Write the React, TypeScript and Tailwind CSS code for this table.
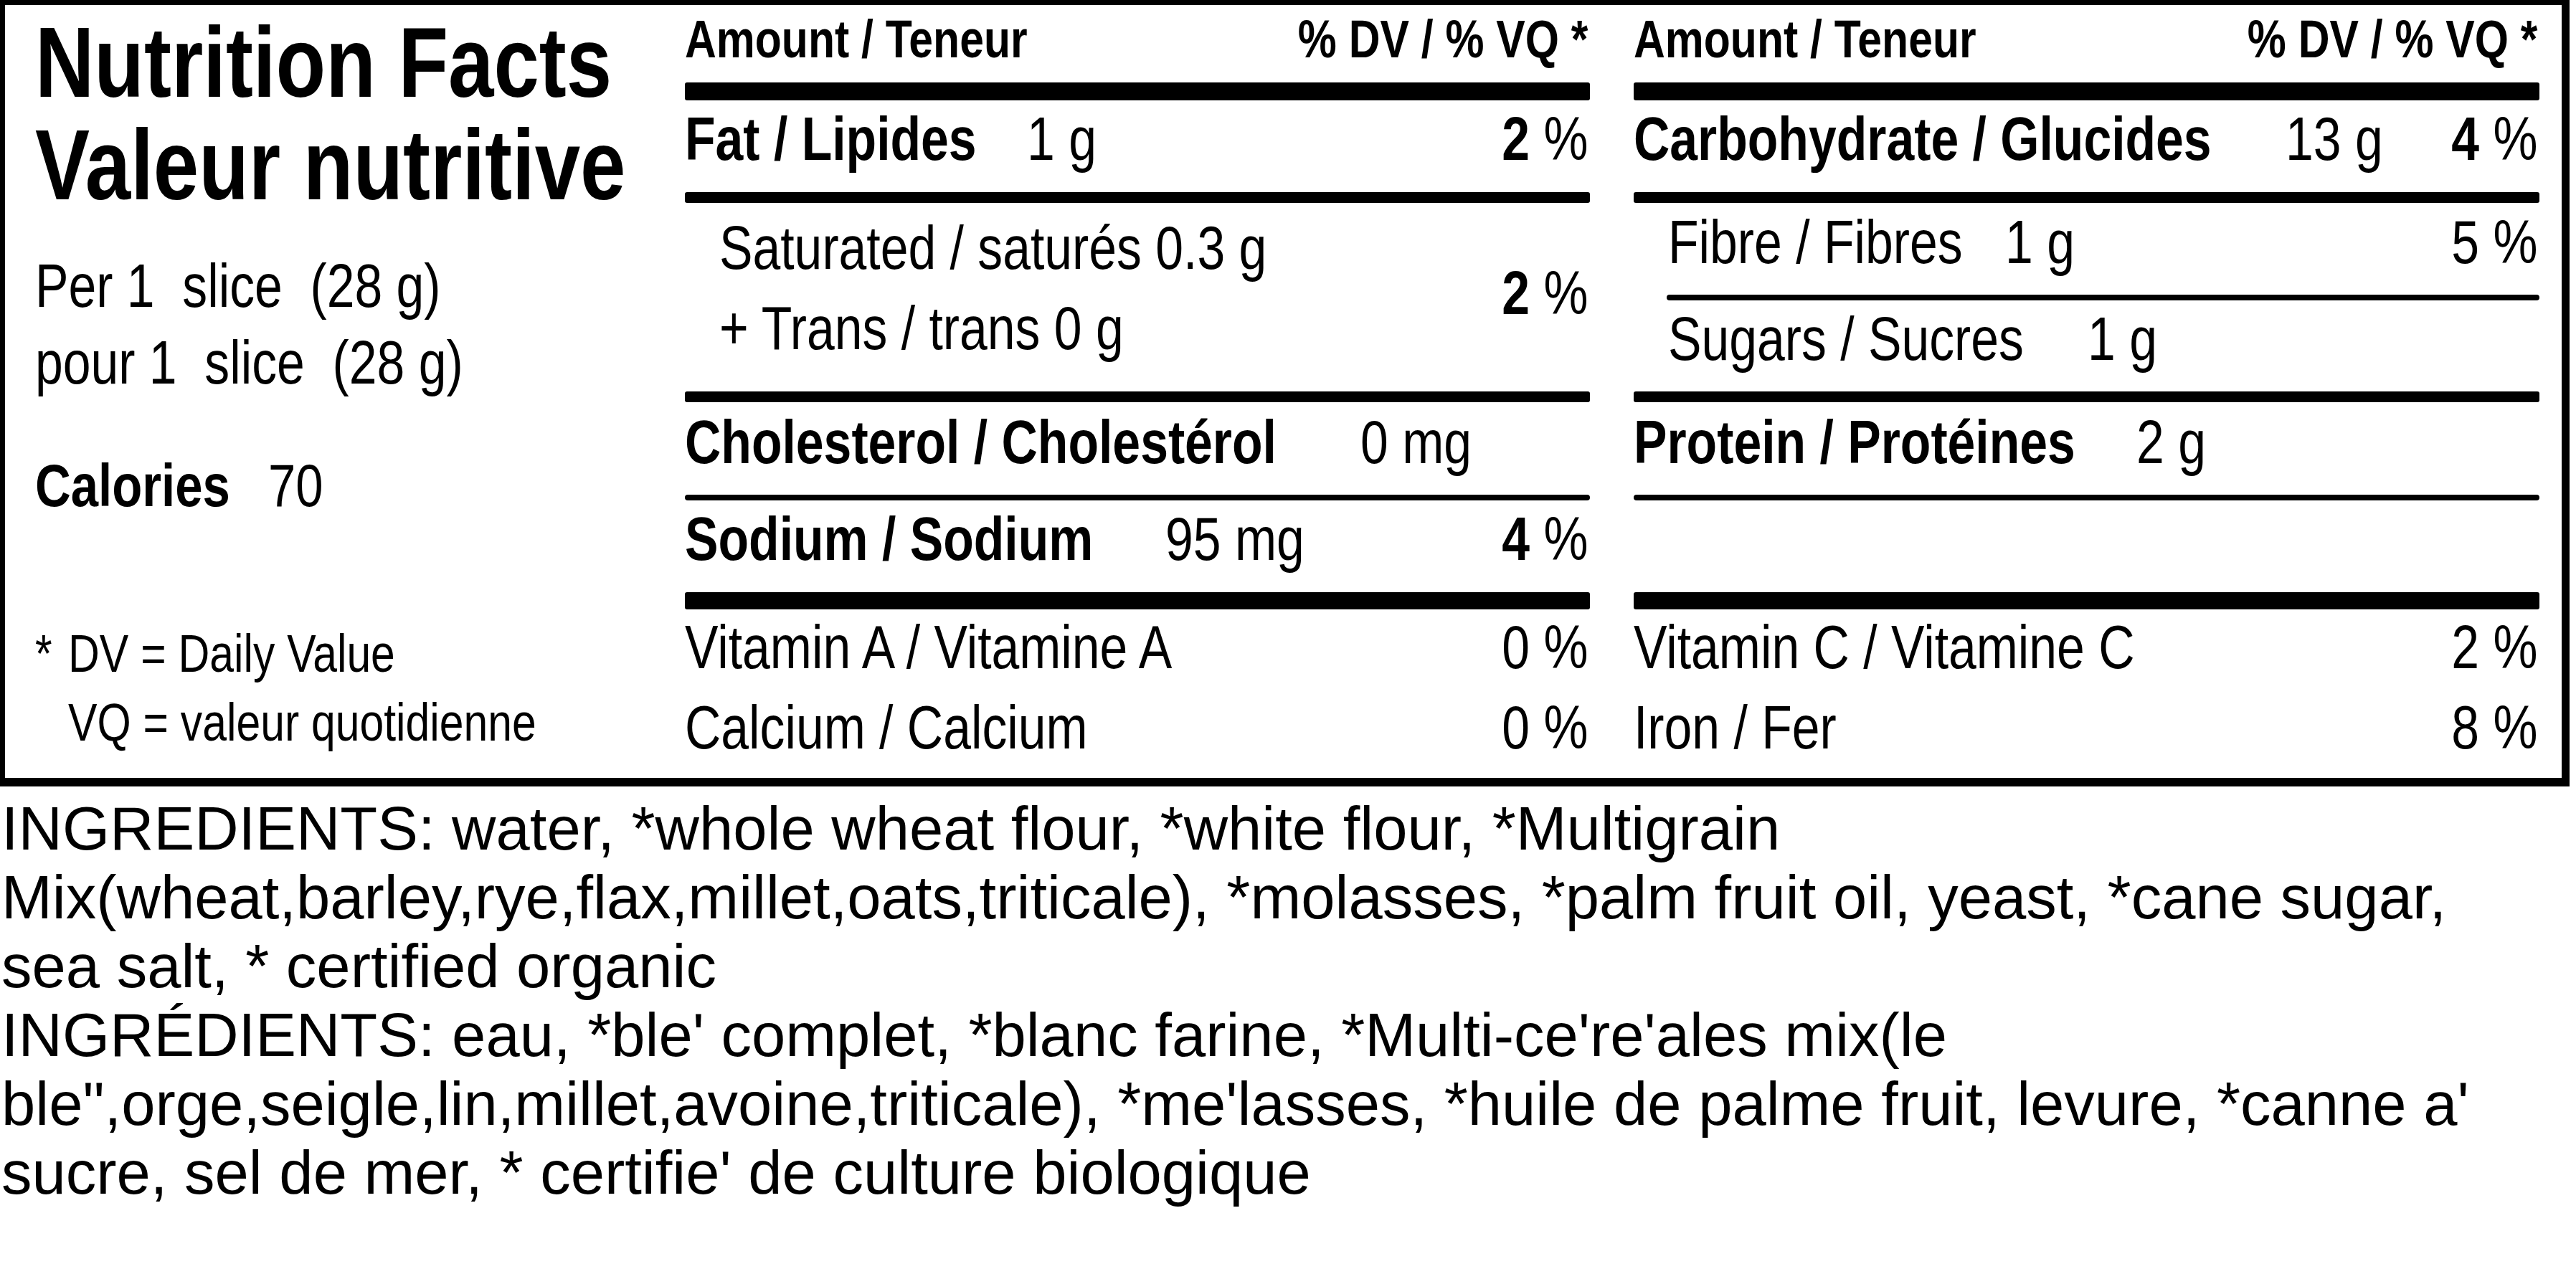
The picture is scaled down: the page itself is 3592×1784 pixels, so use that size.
import React from "react";

// no narrow arial installed, so the label text is squeezed with scale-x
function Cond({ children, right }: { children: React.ReactNode; right?: boolean }) {
    return (
        <span
            className={`inline-block whitespace-pre scale-x-[0.82] ${right ? "origin-right" : "origin-left"}`}>
            {children}
        </span>
    );
}

function Row({ className, children }: { className: string; children: React.ReactNode }) {
    return (
        <div className={`flex shrink-0 items-center justify-between ${className}`}>
            {children}
        </div>
    );
}

function Pct({ value, bold }: { value: string; bold?: boolean }) {
    return (
        <span className="pr-[3px]">
            <Cond right>
                <span className={bold ? "font-bold" : ""}>{value}</span> %
            </Cond>
        </span>
    );
}

function Item({ name, amount, w, bold }: { name: string; amount: string; w: string; bold?: boolean }) {
    return (
        <div className="flex">
            <span className={`shrink-0 ${w} ${bold ? "font-bold" : ""}`}>
                <Cond>{name}</Cond>
            </span>
            <Cond>{amount}</Cond>
        </div>
    );
}

function Header() {
    return (
        <Row className="h-[108px] pb-[13px] text-[74px] font-bold">
            <Cond>Amount / Teneur</Cond>
            <span className="pr-[3px]">
                <Cond right>% DV / % VQ *</Cond>
            </span>
        </Row>
    );
}

// 영양 성분표 //
export default function App() {
    return (
        <div className="min-h-[1784px] w-full bg-white text-black font-['Liberation_Sans',Arial,sans-serif]">
            <div className="flex h-[1097px] w-[3583px] border-t-[7px] border-l-[7px] border-r-[11px] border-b-[12px] border-black">
                {/* left : title, serving, calories */}
                <div className="flex w-[948px] shrink-0 flex-col pl-[42px] pt-[8px] whitespace-nowrap">
                    <div className="text-[139px] font-bold leading-[143px]">
                        <div><Cond>Nutrition Facts</Cond></div>
                        <div><Cond>Valeur nutritive</Cond></div>
                    </div>
                    <div className="mt-[44px] text-[85px] leading-[107px]">
                        <div><Cond>Per 1  slice  (28 g)</Cond></div>
                        <div><Cond>pour 1  slice  (28 g)</Cond></div>
                    </div>
                    <div className="mt-[65px] flex text-[84px] leading-[107px]">
                        <span className="w-[325px] shrink-0 font-bold"><Cond>Calories</Cond></span>
                        <Cond>70</Cond>
                    </div>
                    <div className="mt-[133px] text-[74px] leading-[96px]">
                        <div className="flex">
                            <span className="w-[46px] shrink-0"><Cond>*</Cond></span>
                            <Cond>DV = Daily Value</Cond>
                        </div>
                        <div className="pl-[46px]"><Cond>VQ = valeur quotidienne</Cond></div>
                    </div>
                </div>

                {/* middle */}
                <div className="flex w-[1262px] shrink-0 flex-col whitespace-nowrap text-[85px] leading-[112px]">
                    <Header />
                    <div className="h-[25px] shrink-0 rounded-[3px] bg-black" />
                    <Row className="h-[128px] pb-[21px]">
                        <Item name="Fat / Lipides" amount="1 g" w="w-[477px]" bold />
                        <Pct value="2" bold />
                    </Row>
                    <div className="h-[15px] shrink-0 rounded-[3px] bg-black" />
                    <div className="flex h-[263px] shrink-0 justify-between">
                        <div className="pl-[48px] pt-[7px]">
                            <div><Cond>Saturated / saturés 0.3 g</Cond></div>
                            <div><Cond>+ Trans / trans 0 g</Cond></div>
                        </div>
                        <div className="self-center pb-[11px]">
                            <Pct value="2" bold />
                        </div>
                    </div>
                    <div className="h-[15px] shrink-0 rounded-[3px] bg-black" />
                    <Row className="h-[129px] pb-[18px]">
                        <Item name="Cholesterol / Cholestérol" amount="0 mg" w="w-[942px]" bold />
                    </Row>
                    <div className="h-[8px] shrink-0 rounded-full bg-black" />
                    <Row className="h-[128px] pb-[21px]">
                        <Item name="Sodium / Sodium" amount="95 mg" w="w-[670px]" bold />
                        <Pct value="4" bold />
                    </Row>
                    <div className="h-[24px] shrink-0 rounded-[3px] bg-black" />
                    <Row className="-mt-[3px] h-[112px]">
                        <Cond>Vitamin A / Vitamine A</Cond>
                        <Pct value="0" />
                    </Row>
                    <Row className="h-[112px]">
                        <Cond>Calcium / Calcium</Cond>
                        <Pct value="0" />
                    </Row>
                </div>

                {/* right */}
                <div className="ml-[61px] flex w-[1263px] shrink-0 flex-col whitespace-nowrap text-[85px] leading-[112px]">
                    <Header />
                    <div className="h-[25px] shrink-0 rounded-[3px] bg-black" />
                    <Row className="h-[128px] pb-[21px]">
                        <Item name="Carbohydrate / Glucides" amount="13 g" w="w-[909px]" bold />
                        <Pct value="4" bold />
                    </Row>
                    <div className="h-[15px] shrink-0 rounded-[3px] bg-black" />
                    <Row className="h-[128px] pb-[19px] pl-[48px]">
                        <Item name="Fibre / Fibres" amount="1 g" w="w-[470px]" />
                        <Pct value="5" />
                    </Row>
                    <div className="ml-[46px] h-[8px] shrink-0 rounded-full bg-black" />
                    <Row className="h-[127px] pb-[20px] pl-[48px]">
                        <Item name="Sugars / Sucres" amount="1 g" w="w-[585px]" />
                    </Row>
                    <div className="h-[15px] shrink-0 rounded-[3px] bg-black" />
                    <Row className="h-[129px] pb-[18px]">
                        <Item name="Protein / Protéines" amount="2 g" w="w-[701px]" bold />
                    </Row>
                    <div className="h-[8px] shrink-0 rounded-full bg-black" />
                    <div className="h-[128px] shrink-0" />
                    <div className="h-[24px] shrink-0 rounded-[3px] bg-black" />
                    <Row className="-mt-[3px] h-[112px]">
                        <Cond>Vitamin C / Vitamine C</Cond>
                        <Pct value="2" />
                    </Row>
                    <Row className="h-[112px]">
                        <Cond>Iron / Fer</Cond>
                        <Pct value="8" />
                    </Row>
                </div>
            </div>

            {/* ingredients */}
            <div className="mt-[11px] whitespace-nowrap pl-[2px] text-[85px] leading-[96px]">
                <div>INGREDIENTS: water, *whole wheat flour, *white flour, *Multigrain</div>
                <div>Mix(wheat,barley,rye,flax,millet,oats,triticale), *molasses, *palm fruit oil, yeast, *cane sugar,</div>
                <div>sea salt, * certified organic</div>
                <div>INGRÉDIENTS: eau, *ble' complet, *blanc farine, *Multi-ce're'ales mix(le</div>
                <div>ble",orge,seigle,lin,millet,avoine,triticale), *me'lasses, *huile de palme fruit, levure, *canne a'</div>
                <div>sucre, sel de mer, * certifie' de culture biologique</div>
            </div>
        </div>
    );
}
